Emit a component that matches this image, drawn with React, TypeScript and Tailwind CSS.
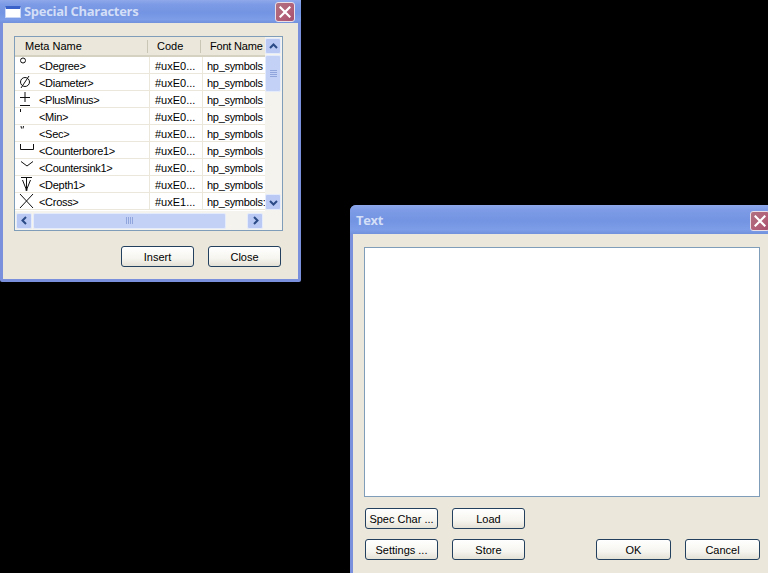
import type { ReactNode } from "react";

type SymbolRow = {
  meta: string;
  code: string;
  font: string;
  icon: ReactNode;
};

const stroke = { stroke: "#111", strokeWidth: 1, fill: "none" };

const rows: SymbolRow[] = [
  { meta: "<Degree>", code: "#uxE0...", font: "hp_symbols", icon: <circle cx="6" cy="3.5" r="2.5" {...stroke} /> },
  {
    meta: "<Diameter>",
    code: "#uxE0...",
    font: "hp_symbols",
    icon: (
      <>
        <circle cx="8" cy="8" r="4.5" {...stroke} />
        <path d="M4 14 L12 2" {...stroke} />
      </>
    ),
  },
  { meta: "<PlusMinus>", code: "#uxE0...", font: "hp_symbols", icon: <path d="M3 6.5 H13 M8 1 V11 M3 14.5 H13" {...stroke} /> },
  { meta: "<Min>", code: "#uxE0...", font: "hp_symbols", icon: <path d="M3.5 1 V4" {...stroke} /> },
  { meta: "<Sec>", code: "#uxE0...", font: "hp_symbols", icon: <path d="M4 1 L4.5 3.5 M6.5 1 L6 3.5" {...stroke} /> },
  { meta: "<Counterbore1>", code: "#uxE0...", font: "hp_symbols", icon: <path d="M3.5 2 V7.5 H16.5 V2" {...stroke} /> },
  { meta: "<Countersink1>", code: "#uxE0...", font: "hp_symbols", icon: <path d="M4 2.5 L10 7 L16 2.5" {...stroke} /> },
  {
    meta: "<Depth1>",
    code: "#uxE0...",
    font: "hp_symbols",
    icon: (
      <>
        <path d="M4 1.5 H15 M9.5 1.5 V14 M5.5 4 L9.5 14 L13.5 4" {...stroke} />
        <circle cx="9.5" cy="14" r="1" fill="#111" />
      </>
    ),
  },
  { meta: "<Cross>", code: "#uxE1...", font: "hp_symbols:", icon: <path d="M3 1 L16 15 M16 1 L3 15" {...stroke} /> },
];

function TitleBar({ title, icon, className }: { title: string; icon?: boolean; className: string }) {
  return (
    <div
      className={`flex shrink-0 items-center bg-[linear-gradient(180deg,#8fa8ea_0%,#7d9be6_18%,#7394e2_55%,#7d9de8_85%,#7191dc_100%)] ${className}`}
    >
      {icon && (
        <div className="mr-[3px] h-[12px] w-[16px] rounded-[1px] border border-[#c9d6f5] border-t-[3px] border-t-[#3b62c8] bg-white" />
      )}
      <span className="font-['Open_Sans',sans-serif] text-[13px] font-bold tracking-[-0.3px] text-[#d3def7]">{title}</span>
      <div className="ml-auto flex h-[20px] w-[20px] shrink-0 items-center justify-center rounded-[3px] border border-[#e8dfe8] bg-[linear-gradient(135deg,#b0707f,#b25f78_60%,#a5506d)]">
        <svg width="12" height="12" viewBox="0 0 12 12">
          <path d="M1.5 1.5 L10.5 10.5 M10.5 1.5 L1.5 10.5" stroke="#fff" strokeWidth="2.2" strokeLinecap="square" />
        </svg>
      </div>
    </div>
  );
}

function XpButton({ label, className }: { label: string; className: string }) {
  return (
    <button
      className={`flex h-[21px] items-center justify-center rounded-[3px] border border-[#23405f] bg-[linear-gradient(180deg,#ffffff_0%,#f6f5ef_60%,#e4e1d6_100%)] pt-px text-[11px] text-black ${className}`}
    >
      {label}
    </button>
  );
}

function ScrollArrow({ d }: { d: string }) {
  return (
    <div className="flex h-[16px] w-[16px] shrink-0 items-center justify-center rounded-[2px] border border-[#e4ebfb] bg-[#b9c9f3]">
      <svg width="9" height="9" viewBox="0 0 9 9">
        <path d={d} stroke="#2c4a86" strokeWidth="2" fill="none" />
      </svg>
    </div>
  );
}

function Grip({ vertical }: { vertical?: boolean }) {
  return (
    <div className={`flex gap-px ${vertical ? "flex-col" : ""}`}>
      {[0, 1, 2, 3].map((i) => (
        <div key={i} className={`bg-[#8fa5dc] ${vertical ? "h-px w-[7px]" : "h-[7px] w-px"}`} />
      ))}
    </div>
  );
}

function SymbolList() {
  return (
    <div className="flex h-[195px] w-[269px] border border-[#7f9db9] bg-white">
      <div className="flex min-w-0 flex-1 flex-col">
        <div className="flex h-[20px] shrink-0 items-center border-b-2 border-[#d6d2c2] bg-[#ebe8db] pt-px text-[11px] text-black">
          <div className="w-[132px] pl-[10px]">Meta Name</div>
          <div className="h-[13px] w-px bg-[#c9c6b6]" />
          <div className="w-[52px] pl-[9px]">Code</div>
          <div className="h-[13px] w-px bg-[#c9c6b6]" />
          <div className="flex-1 whitespace-nowrap pl-[9px] tracking-[-0.2px]">Font Name</div>
        </div>
        <div className="flex-1 overflow-hidden">
          {rows.map((row) => (
            <div key={row.meta} className="flex h-[17px] border-b border-[#ebe8db] text-[11px] text-black">
              <div className="flex w-[135px] shrink-0 items-center border-r border-[#ebe8db]">
                <svg width="20" height="16" viewBox="0 0 20 16" className="ml-[2px] shrink-0 self-start">
                  {row.icon}
                </svg>
                <span className="pl-[2px] pt-[2px] tracking-[-0.3px]">{row.meta}</span>
              </div>
              <div className="flex w-[53px] shrink-0 items-center border-r border-[#ebe8db] pl-[5px] pt-[2px]">{row.code}</div>
              <div className="flex min-w-0 items-center whitespace-nowrap pl-[4px] pt-[2px] tracking-[-0.3px]">{row.font}</div>
            </div>
          ))}
        </div>
        <div className="flex h-[19px] shrink-0 items-center bg-[#f4f3ee] px-px">
          <ScrollArrow d="M6 1 L2.5 4.5 L6 8" />
          <div className="ml-px flex h-[16px] w-[193px] items-center justify-center rounded-[2px] border border-[#e4ebfb] bg-[#c3d1f6]">
            <Grip />
          </div>
          <div className="ml-auto mr-[1px]">
            <ScrollArrow d="M3 1 L6.5 4.5 L3 8" />
          </div>
        </div>
      </div>
      <div className="flex w-[17px] shrink-0 flex-col bg-[#f4f3ee] pt-px">
        <ScrollArrow d="M1 6 L4.5 2.5 L8 6" />
        <div className="mt-px flex h-[37px] w-[16px] items-center justify-center rounded-[2px] border border-[#e4ebfb] bg-[#c3d1f6]">
          <Grip vertical />
        </div>
        <div className="mt-auto mb-[20px]">
          <ScrollArrow d="M1 3 L4.5 6.5 L8 3" />
        </div>
      </div>
    </div>
  );
}

export default function App() {
  return (
    <div className="relative h-[573px] w-[768px] overflow-hidden bg-black font-['Liberation_Sans',sans-serif]">
      {/* fenêtre Special Characters */}
      <div className="absolute left-0 top-0 flex h-[282px] w-[301px] flex-col rounded-b-[2px] bg-[#7b90dc]">
        <TitleBar title="Special Characters" icon className="h-[23px] pl-[5px] pr-[6px]" />
        <div className="mx-[3px] mb-[3px] flex flex-1 flex-col bg-[#ebe8db] pl-[11px] pt-[13px]">
          <SymbolList />
          <div className="mt-[15px] flex gap-[14px] pl-[107px]">
            <XpButton label="Insert" className="w-[73px]" />
            <XpButton label="Close" className="w-[73px]" />
          </div>
        </div>
      </div>

      {/* fenêtre Text */}
      <div className="absolute left-[350px] top-[205px] flex h-[380px] w-[424px] flex-col rounded-t-[6px] bg-[#7b90dc]">
        <TitleBar title="Text" className="h-[29px] rounded-t-[6px] pl-[6px] pr-[4px] pt-[3px]" />
        <div className="ml-[3px] flex flex-1 flex-col bg-[#ebe8db] pl-[11px] pt-[13px]">
          <div className="h-[250px] w-[396px] border border-[#7f9db9] bg-white" />
          <div className="mt-[11px] flex gap-[14px] pl-px">
            <XpButton label="Spec Char ..." className="w-[73px]" />
            <XpButton label="Load" className="w-[73px]" />
          </div>
          <div className="mt-[10px] flex pl-px">
            <XpButton label="Settings ..." className="w-[73px]" />
            <XpButton label="Store" className="ml-[14px] w-[73px]" />
            <XpButton label="OK" className="ml-[71px] w-[75px]" />
            <XpButton label="Cancel" className="ml-[14px] w-[75px]" />
          </div>
        </div>
      </div>
    </div>
  );
}
